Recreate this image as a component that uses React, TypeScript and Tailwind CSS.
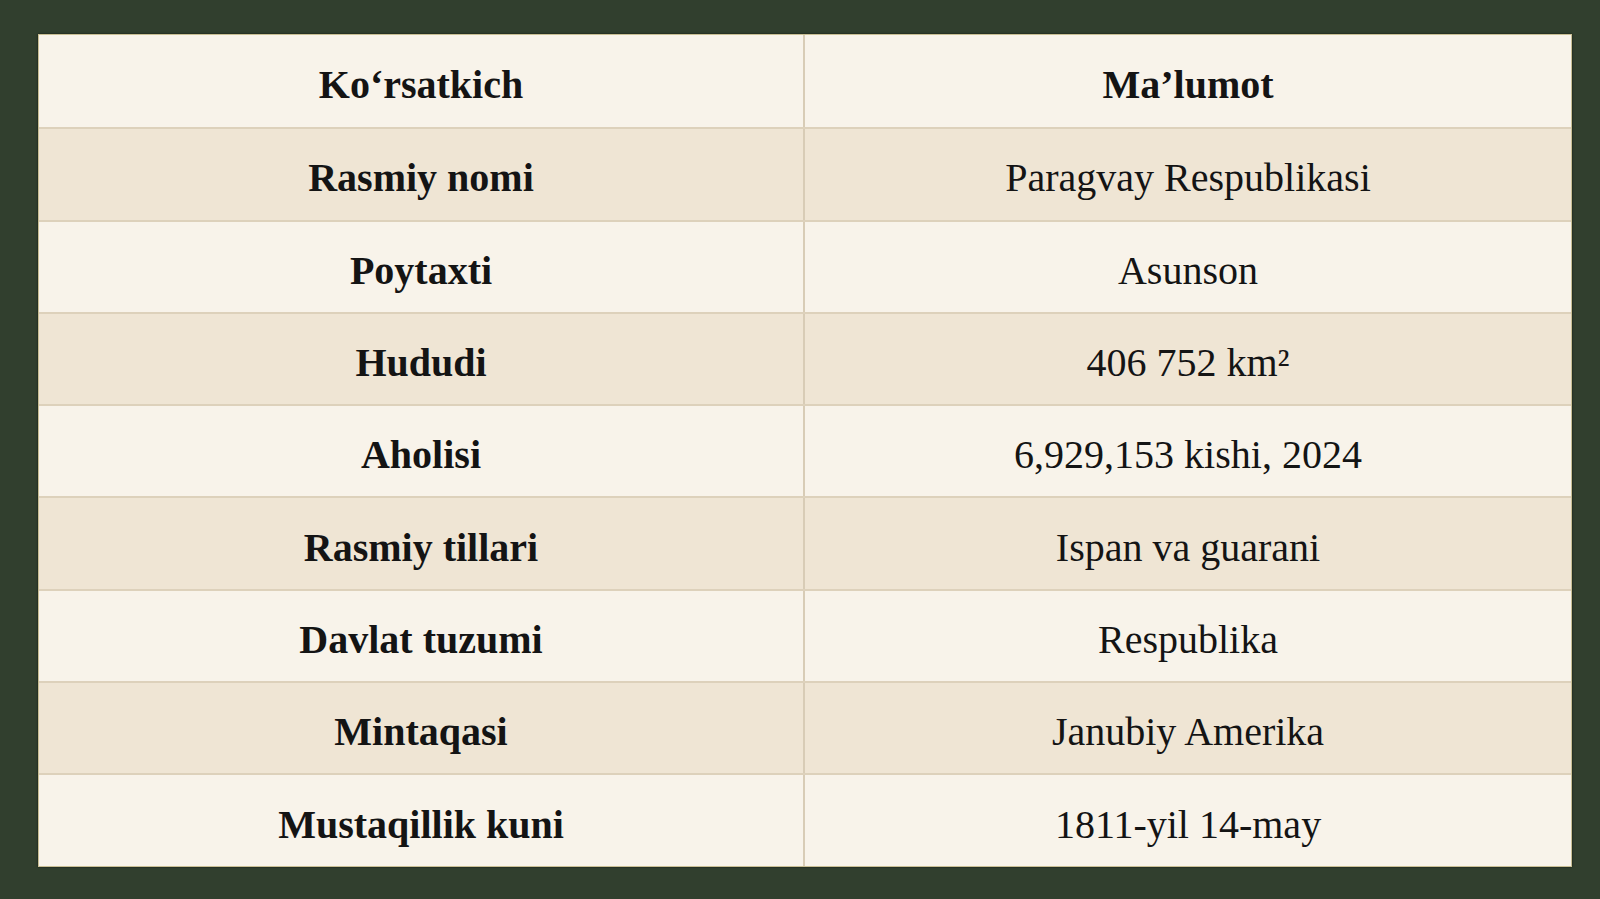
const rows = [
  ["Ko‘rsatkich", "Ma’lumot"],
  ["Rasmiy nomi", "Paragvay Respublikasi"],
  ["Poytaxti", "Asunson"],
  ["Hududi", "406 752 km²"],
  ["Aholisi", "6,929,153 kishi, 2024"],
  ["Rasmiy tillari", "Ispan va guarani"],
  ["Davlat tuzumi", "Respublika"],
  ["Mintaqasi", "Janubiy Amerika"],
  ["Mustaqillik kuni", "1811-yil 14-may"],
];

export default function App() {
  return (
    <div className="w-full h-[899px] bg-[#313f2e] pt-[34px] pl-[38px] font-['Liberation_Serif',serif] text-[#141414]">
      <div className="w-[1534px] border border-[#c9bf94] shadow-[0_0_2px_rgba(0,0,0,0.6)]">
        {rows.map((row, i) => (
          <div
            key={i}
            className={`grid grid-cols-2 h-[92.3px] ${
              i % 2 === 1 ? "bg-[#efe5d4]" : "bg-[#f8f3ea]"
            } ${i > 0 ? "border-t-2 border-[#ddd1bb]" : ""}`}
          >
            <div className="flex items-center justify-center pt-[8px] text-[40px] font-bold border-r-2 border-[#d8ccb6]">
              {row[0]}
            </div>
            <div
              className={`flex items-center justify-center pt-[8px] text-[40px] ${
                i === 0 ? "font-bold" : ""
              }`}
            >
              {row[1]}
            </div>
          </div>
        ))}
      </div>
    </div>
  );
}
